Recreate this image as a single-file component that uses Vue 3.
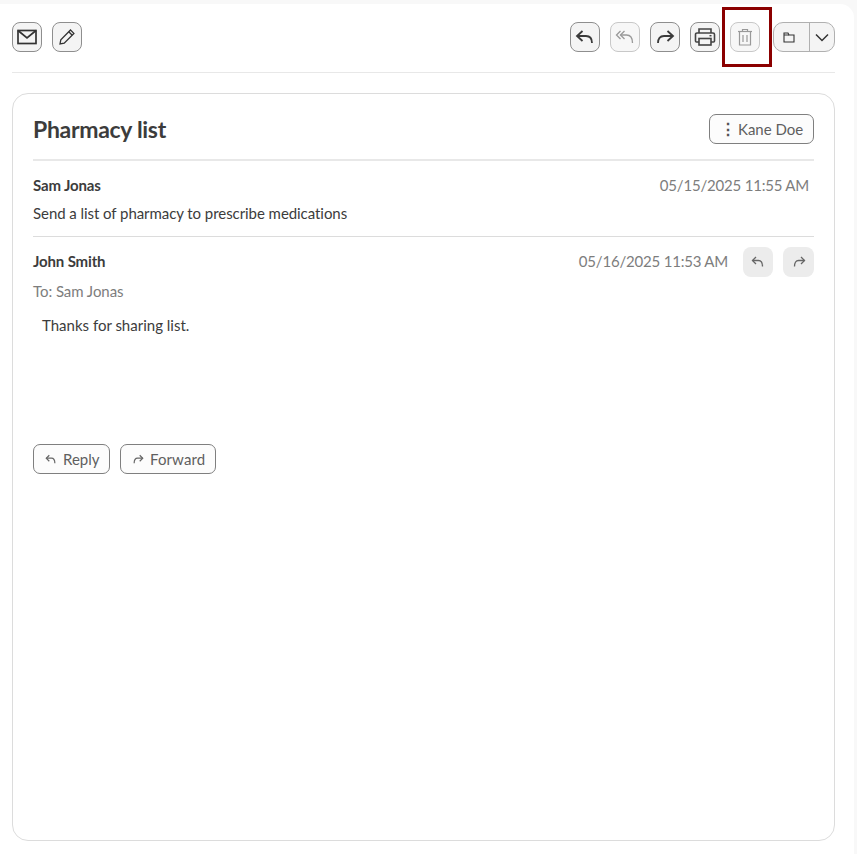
<template>
  <div class="page">
    <div class="panel">
      <div class="toolbar">
        <div class="group">
          <button class="tool">
            <svg width="22" height="18" viewBox="0 0 22 18" fill="none" stroke="#333" stroke-width="1.700"><rect x="2" y="2.500" width="18" height="13" /><path d="M2 2.500l9 7.500 9-7.500" /></svg>
          </button>
          <button class="tool">
            <svg width="18" height="18" viewBox="0 0 18 18" fill="none" stroke="#333" stroke-width="1.300"><path d="M2 16l.8-4.200L12.500 2l3.400 3.400-9.700 9.800z" /><path d="M10.800 3.800l3.400 3.400" /></svg>
          </button>
        </div>
        <div class="group right">
          <button class="tool">
            <svg width="20" height="18" viewBox="0 0 20 18" fill="none" stroke="#3a3a3a" stroke-width="1.800"><path d="M7.500 3L2 8l5.500 5" /><path d="M2 8h9c4 0 6 2.500 6 7" /></svg>
          </button>
          <button class="tool disabled">
            <svg width="20" height="18" viewBox="0 0 20 18" fill="none" stroke="#999" stroke-width="1.300"><path d="M5.500 3L1.500 7l4 4" /><path d="M9.500 3L5.500 7l4 4" /><path d="M5.500 7h6c4 0 6 3 6 8" /></svg>
          </button>
          <button class="tool">
            <svg width="20" height="18" viewBox="0 0 20 18" fill="none" stroke="#3a3a3a" stroke-width="1.800"><path d="M12.500 3L18 8l-5.500 5" /><path d="M18 8H9c-4 0-6 2.500-6 7" /></svg>
          </button>
          <button class="tool">
            <svg width="22" height="20" viewBox="0 0 22 20" fill="none" stroke="#444" stroke-width="1.600"><path d="M5 6V2h12v4" /><path d="M5 15H2.500a1 1 0 0 1-1-1V7.500a1.500 1.500 0 0 1 1.500-1.500h16a1.500 1.500 0 0 1 1.500 1.500V14a1 1 0 0 1-1 1H17" /><rect x="5" y="11.500" width="12" height="6.500" /><path d="M15.500 8.700h2" stroke-width="1.500" /></svg>
          </button>
          <button class="tool disabled trash">
            <svg width="16" height="18" viewBox="0 0 16 18" fill="none" stroke="#999" stroke-width="1.200"><path d="M1 3.500h14" /><path d="M5.500 3.500V1.500h5v2" /><path d="M2.500 3.500v13.500h11V3.500" /><path d="M6 7v7M10 7v7" /></svg>
          </button>
          <div class="split">
            <button class="split-main">
              <svg width="12" height="11" viewBox="0 0 12 11" fill="none" stroke="#333" stroke-width="1.100"><path d="M1 10V1h4l1 2h5v7z" /><path d="M1 3h5" /></svg>
            </button>
            <button class="split-arrow">
              <svg width="14" height="9" viewBox="0 0 14 9" fill="none" stroke="#333" stroke-width="1.500"><path d="M1 1.500l6 6 6-6" /></svg>
            </button>
          </div>
        </div>
        <div class="highlight"></div>
      </div>

      <div class="card">
        <div class="card-head">
          <h1>Pharmacy list</h1>
          <button class="outline kane"><span class="dots">⋮</span>Kane Doe</button>
        </div>
        <div class="message first">
          <div class="row">
            <span class="name">Sam Jonas</span>
            <span class="date">05/15/2025 11:55 AM</span>
          </div>
          <p class="body">Send a list of pharmacy to prescribe medications</p>
        </div>
        <div class="message second">
          <div class="row">
            <span class="name">John Smith</span>
            <div class="meta">
              <span class="date">05/16/2025 11:53 AM</span>
              <button class="soft">
                <svg width="14" height="12" viewBox="0 0 14 12" fill="none" stroke="#666" stroke-width="1.300"><path d="M5 1L1.500 4.500 5 8" /><path d="M1.500 4.500h6c2.500 0 4 2 4 6" /></svg>
              </button>
              <button class="soft">
                <svg width="14" height="12" viewBox="0 0 14 12" fill="none" stroke="#666" stroke-width="1.300"><path d="M9 1l3.500 3.500L9 8" /><path d="M12.500 4.500h-6c-2.500 0-4 2-4 6" /></svg>
              </button>
            </div>
          </div>
          <div class="to">To: Sam Jonas</div>
          <p class="reply-body">Thanks for sharing list.</p>
        </div>
        <div class="actions">
          <button class="outline reply">
            <svg width="12" height="11" viewBox="0 0 14 12" fill="none" stroke="#666" stroke-width="1.400"><path d="M5 1L1.500 4.500 5 8" /><path d="M1.500 4.500h6c2.500 0 4 2 4 6" /></svg>
            Reply
          </button>
          <button class="outline forward">
            <svg width="12" height="11" viewBox="0 0 14 12" fill="none" stroke="#666" stroke-width="1.400"><path d="M9 1l3.500 3.500L9 8" /><path d="M12.500 4.500h-6c-2.500 0-4 2-4 6" /></svg>
            Forward
          </button>
        </div>
      </div>
    </div>
  </div>
</template>

<script setup>
</script>

<style>
html, body { margin: 0; background: #f8f8f8; }
</style>

<style scoped>
.page {
  width: 857px;
  height: 854px;
  box-sizing: border-box;
  padding: 4px 3px 0 0;
  overflow: hidden;
  font-family: Lato, "Liberation Sans", sans-serif;
  color: #333;
}
.panel {
  background: #fff;
  height: 850px;
  box-sizing: border-box;
  border-top-right-radius: 14px;
  padding: 0 19px 0 12px;
}
button { font-family: inherit; padding: 0; cursor: pointer; }
.toolbar {
  position: relative;
  height: 69px;
  padding-top: 18px;
  box-sizing: border-box;
  display: flex;
  justify-content: space-between;
  align-items: flex-start;
  border-bottom: 1px solid #e8e8e8;
}
.group { display: flex; gap: 10px; }
.tool {
  width: 30px;
  height: 30px;
  border: 1px solid #8e8e8e;
  border-radius: 8px;
  background: #f4f4f4;
  display: flex;
  align-items: center;
  justify-content: center;
}
.tool.disabled { border-color: #c8c8c8; background: #f7f7f7; }
.split {
  margin-left: 3px;
  width: 62px;
  height: 30px;
  box-sizing: border-box;
  border: 1px solid #b0b0b0;
  border-radius: 10px;
  background: #f4f4f4;
  display: flex;
  overflow: hidden;
}
.split-main {
  width: 36px;
  border: 0;
  border-right: 1px solid #b0b0b0;
  padding-right: 5px;
  background: transparent;
  display: flex;
  align-items: center;
  justify-content: center;
}
.split-arrow {
  flex: 1;
  border: 0;
  background: transparent;
  display: flex;
  align-items: center;
  justify-content: center;
}
.highlight {
  position: absolute;
  left: 710px;
  top: 3px;
  width: 50px;
  height: 60px;
  box-sizing: border-box;
  border: 3px solid #8b0000;
}
.card {
  margin-top: 20px;
  height: 748px;
  box-sizing: border-box;
  border: 1px solid #dcdcdc;
  border-radius: 16px;
  padding: 21px 20px 0;
}
.card-head {
  display: flex;
  justify-content: space-between;
  align-items: flex-start;
  height: 29px;
  padding-bottom: 15px;
  border-bottom: 2px solid #e8e8e8;
}
h1 {
  margin: 0;
  font-size: 23px;
  font-weight: 700;
  line-height: 29px;
  letter-spacing: -0.3px;
  color: #3c3c3c;
}
.outline {
  height: 30px;
  box-sizing: border-box;
  border: 1px solid #7f7f7f;
  border-radius: 7px;
  background: #fcfcfc;
  color: #5f5f5f;
  font-size: 15px;
  padding: 0 9px 0 11px;
  display: inline-flex;
  align-items: center;
  gap: 6px;
  white-space: nowrap;
}
.forward { width: 96px; letter-spacing: 0.1px; }
.reply { width: 77px; }
.kane { width: 105px; gap: 4px; padding-left: 10px; margin-top: -1px; }
.dots { font-size: 16px; color: #555; width: 14px; text-align: center; font-weight: 700; }
.message { padding-top: 13px; }
.first { height: 76px; box-sizing: border-box; border-bottom: 1px solid #dcdcdc; }
.second { padding-top: 10px; }
.row { display: flex; justify-content: space-between; align-items: center; }
.first .row { padding-right: 5px; height: 22px; }
.second .row { height: 30px; }
.second .name, .second .date { margin-bottom: 2px; }
.name { font-size: 15px; font-weight: 700; letter-spacing: -0.15px; color: #3c3c3c; }
.date { font-size: 15px; letter-spacing: -0.2px; color: #7d7d7d; }
.meta { display: flex; align-items: center; gap: 10px; }
.meta .date { margin-right: 5px; }
.soft {
  width: 30px;
  height: 30px;
  border: 0;
  border-radius: 8px;
  background: #ececec;
  display: flex;
  align-items: center;
  justify-content: center;
}
.soft:last-child { width: 31px; }
.body { margin: 6px 0 0; font-size: 15px; line-height: 22px; letter-spacing: -0.06px; color: #3c3c3c; }
.to { margin-top: 3px; font-size: 15px; line-height: 22px; letter-spacing: -0.06px; color: #7d7d7d; }
.reply-body { margin: 12px 0 0 9px; font-size: 15px; line-height: 22px; color: #3c3c3c; }
.actions { display: flex; gap: 10px; margin-top: 108px; }
</style>
